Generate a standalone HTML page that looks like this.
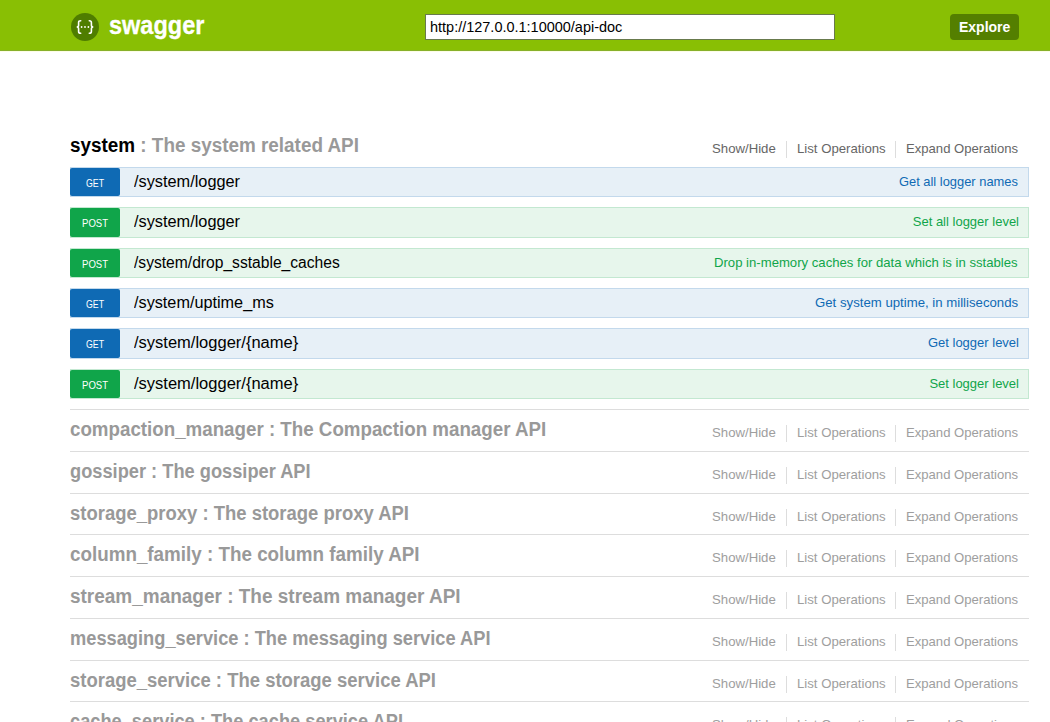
<!DOCTYPE html>
<html><head><meta charset="utf-8"><style>
*{box-sizing:border-box}
html,body{margin:0;padding:0;background:#fff;width:1050px;height:722px;overflow:hidden;font-family:"Liberation Sans",sans-serif}
div{position:absolute;white-space:nowrap}
#header{left:0;top:0;width:1050px;height:51px;background:#89bf04}
#logo{left:71px;top:13px;width:28px;height:28px;border-radius:50%;background:#4f7d00}
#logo svg{position:absolute;left:0;top:0}
#brand{left:109px;top:13px;font-size:25px;line-height:25px;font-weight:bold;color:#fff;-webkit-text-stroke:0.3px #fff;transform:scaleX(0.94);transform-origin:0 0}
#url{left:425px;top:14px;width:410px;height:26px;border:1px solid #687a4c;background:#fff}
#urlt{left:430px;top:19px;font-size:15px;line-height:15px;color:#000;transform:scaleX(0.965);transform-origin:0 0}
#explore{left:950px;top:14px;width:69px;height:26px;background:#547f00;border-radius:4px}
#expt{left:959px;top:20px;font-size:14px;line-height:14px;font-weight:bold;color:#fff}
.h{left:70px;font-size:20px;line-height:20px;font-weight:bold;color:#999;transform-origin:0 0}
.h b{color:#000}
.o{font-size:13.2px;line-height:13px;color:#9e9e9e}
.o.dark{color:#666}
.sep{width:1px;height:17px;background:#ddd}
.op{left:70px;width:959px;height:30px;border:1px solid}
.op.get{background:#e7f0f7;border-color:#c3d9ec}
.op.post{background:#e7f6ec;border-color:#c3e8d1}
.m{left:70px;width:50px;height:28px;border-radius:2px}
.m.get{background:#0f6ab4}
.m.post{background:#10a54a}
.mt{font-size:11px;line-height:11px;color:#fff;transform-origin:0 0}
.p{left:134px;font-size:16px;line-height:16px;color:#000;transform-origin:0 0}
.s{right:32px;font-size:13px;line-height:13px}
.s.get{color:#0f6ab4}
.s.post{color:#10a54a}
.line{left:70px;width:959px;height:1px;background:#ddd}
</style></head><body>
<div id="header"></div><div style="left:0;top:50px;width:1050px;height:1px;background:#87b029"></div><div style="left:0;top:51px;width:1050px;height:1px;background:#fdfde6"></div>
<div id="logo"><svg width="28" height="28" viewBox="0 0 28 28" fill="none" stroke="#fff" stroke-width="1.6" stroke-linecap="round"><path d="M9.7 7.7 C8.2 7.7 7.6 8.2 7.6 9.6 L7.6 12.3 C7.6 13.5 7 14 5.7 14 C7 14 7.6 14.5 7.6 15.7 L7.6 18.4 C7.6 19.8 8.2 20.3 9.7 20.3"/><path d="M18.3 7.7 C19.8 7.7 20.4 8.2 20.4 9.6 L20.4 12.3 C20.4 13.5 21 14 22.3 14 C21 14 20.4 14.5 20.4 15.7 L20.4 18.4 C20.4 19.8 19.8 20.3 18.3 20.3"/><circle cx="10.6" cy="14" r="0.9" fill="#fff" stroke="none"/><circle cx="14" cy="14" r="0.9" fill="#fff" stroke="none"/><circle cx="17.4" cy="14" r="0.9" fill="#fff" stroke="none"/></svg></div>
<div id="brand">swagger</div>
<div id="url"></div><div id="urlt">http://127.0.0.1:10000/api-doc</div>
<div id="explore"></div><div id="expt">Explore</div>
<div class="h" style="top:135px;transform:scaleX(0.9441)"><b>system</b> : The system related API</div>
<div class="o dark" style="left:712px;top:142px">Show/Hide</div>
<div class="sep" style="left:786px;top:141px"></div>
<div class="o dark" style="left:797px;top:142px">List Operations</div>
<div class="sep" style="left:895px;top:141px"></div>
<div class="o dark" style="left:906px;top:142px;font-size:13.1px">Expand Operations</div>
<div class="op get" style="top:167px;height:30px"></div>
<div class="m get" style="top:168px;height:28px"></div>
<div class="mt" style="left:86px;top:178px;transform:scaleX(0.8)">GET</div>
<div class="p" style="top:174px;transform:scaleX(1.0192)">/system/logger</div>
<div class="s get" style="top:175px;right:32px;transform:scaleX(0.992);transform-origin:100% 0">Get all logger names</div>
<div class="op post" style="top:207px;height:31px"></div>
<div class="m post" style="top:208px;height:29px"></div>
<div class="mt" style="left:82px;top:218px;transform:scaleX(0.87)">POST</div>
<div class="p" style="top:214px;transform:scaleX(1.0192)">/system/logger</div>
<div class="s post" style="top:215px;right:31px;transform:scaleX(1.0);transform-origin:100% 0">Set all logger level</div>
<div class="op post" style="top:248px;height:30px"></div>
<div class="m post" style="top:249px;height:28px"></div>
<div class="mt" style="left:82px;top:259px;transform:scaleX(0.87)">POST</div>
<div class="p" style="top:255px;transform:scaleX(0.9763)">/system/drop_sstable_caches</div>
<div class="s post" style="top:256px;right:32px;transform:scaleX(1.01);transform-origin:100% 0">Drop in-memory caches for data which is in sstables</div>
<div class="op get" style="top:288px;height:30px"></div>
<div class="m get" style="top:289px;height:28px"></div>
<div class="mt" style="left:86px;top:299px;transform:scaleX(0.8)">GET</div>
<div class="p" style="top:295px;transform:scaleX(1.0145)">/system/uptime_ms</div>
<div class="s get" style="top:296px;right:32px;transform:scaleX(1.015);transform-origin:100% 0">Get system uptime, in milliseconds</div>
<div class="op get" style="top:328px;height:31px"></div>
<div class="m get" style="top:329px;height:29px"></div>
<div class="mt" style="left:86px;top:339px;transform:scaleX(0.8)">GET</div>
<div class="p" style="top:335px;transform:scaleX(1.0314)">/system/logger/{name}</div>
<div class="s get" style="top:336px;right:31px;transform:scaleX(1.0);transform-origin:100% 0">Get logger level</div>
<div class="op post" style="top:369px;height:30px"></div>
<div class="m post" style="top:370px;height:28px"></div>
<div class="mt" style="left:82px;top:380px;transform:scaleX(0.87)">POST</div>
<div class="p" style="top:376px;transform:scaleX(1.0314)">/system/logger/{name}</div>
<div class="s post" style="top:377px;right:31px;transform:scaleX(1.0);transform-origin:100% 0">Set logger level</div>
<div class="line" style="top:409px"></div>
<div class="h" style="top:419px;transform:scaleX(0.9369)">compaction_manager : The Compaction manager API</div>
<div class="o" style="left:712px;top:426px">Show/Hide</div>
<div class="sep" style="left:786px;top:425px"></div>
<div class="o" style="left:797px;top:426px">List Operations</div>
<div class="sep" style="left:895px;top:425px"></div>
<div class="o" style="left:906px;top:426px;font-size:13.1px">Expand Operations</div>
<div class="line" style="top:451px"></div>
<div class="h" style="top:461px;transform:scaleX(0.9122)">gossiper : The gossiper API</div>
<div class="o" style="left:712px;top:468px">Show/Hide</div>
<div class="sep" style="left:786px;top:467px"></div>
<div class="o" style="left:797px;top:468px">List Operations</div>
<div class="sep" style="left:895px;top:467px"></div>
<div class="o" style="left:906px;top:468px;font-size:13.1px">Expand Operations</div>
<div class="line" style="top:493px"></div>
<div class="h" style="top:503px;transform:scaleX(0.9233)">storage_proxy : The storage proxy API</div>
<div class="o" style="left:712px;top:510px">Show/Hide</div>
<div class="sep" style="left:786px;top:509px"></div>
<div class="o" style="left:797px;top:510px">List Operations</div>
<div class="sep" style="left:895px;top:509px"></div>
<div class="o" style="left:906px;top:510px;font-size:13.1px">Expand Operations</div>
<div class="line" style="top:534px"></div>
<div class="h" style="top:544px;transform:scaleX(0.9407)">column_family : The column family API</div>
<div class="o" style="left:712px;top:551px">Show/Hide</div>
<div class="sep" style="left:786px;top:550px"></div>
<div class="o" style="left:797px;top:551px">List Operations</div>
<div class="sep" style="left:895px;top:550px"></div>
<div class="o" style="left:906px;top:551px;font-size:13.1px">Expand Operations</div>
<div class="line" style="top:576px"></div>
<div class="h" style="top:586px;transform:scaleX(0.9488)">stream_manager : The stream manager API</div>
<div class="o" style="left:712px;top:593px">Show/Hide</div>
<div class="sep" style="left:786px;top:592px"></div>
<div class="o" style="left:797px;top:593px">List Operations</div>
<div class="sep" style="left:895px;top:592px"></div>
<div class="o" style="left:906px;top:593px;font-size:13.1px">Expand Operations</div>
<div class="line" style="top:618px"></div>
<div class="h" style="top:628px;transform:scaleX(0.9129)">messaging_service : The messaging service API</div>
<div class="o" style="left:712px;top:635px">Show/Hide</div>
<div class="sep" style="left:786px;top:634px"></div>
<div class="o" style="left:797px;top:635px">List Operations</div>
<div class="sep" style="left:895px;top:634px"></div>
<div class="o" style="left:906px;top:635px;font-size:13.1px">Expand Operations</div>
<div class="line" style="top:660px"></div>
<div class="h" style="top:670px;transform:scaleX(0.9239)">storage_service : The storage service API</div>
<div class="o" style="left:712px;top:677px">Show/Hide</div>
<div class="sep" style="left:786px;top:676px"></div>
<div class="o" style="left:797px;top:677px">List Operations</div>
<div class="sep" style="left:895px;top:676px"></div>
<div class="o" style="left:906px;top:677px;font-size:13.1px">Expand Operations</div>
<div class="line" style="top:701px"></div>
<div class="h" style="top:711px;transform:scaleX(0.9121)">cache_service : The cache service API</div>
<div class="o" style="left:712px;top:718px">Show/Hide</div>
<div class="sep" style="left:786px;top:717px"></div>
<div class="o" style="left:797px;top:718px">List Operations</div>
<div class="sep" style="left:895px;top:717px"></div>
<div class="o" style="left:906px;top:718px;font-size:13.1px">Expand Operations</div>
</body></html>
